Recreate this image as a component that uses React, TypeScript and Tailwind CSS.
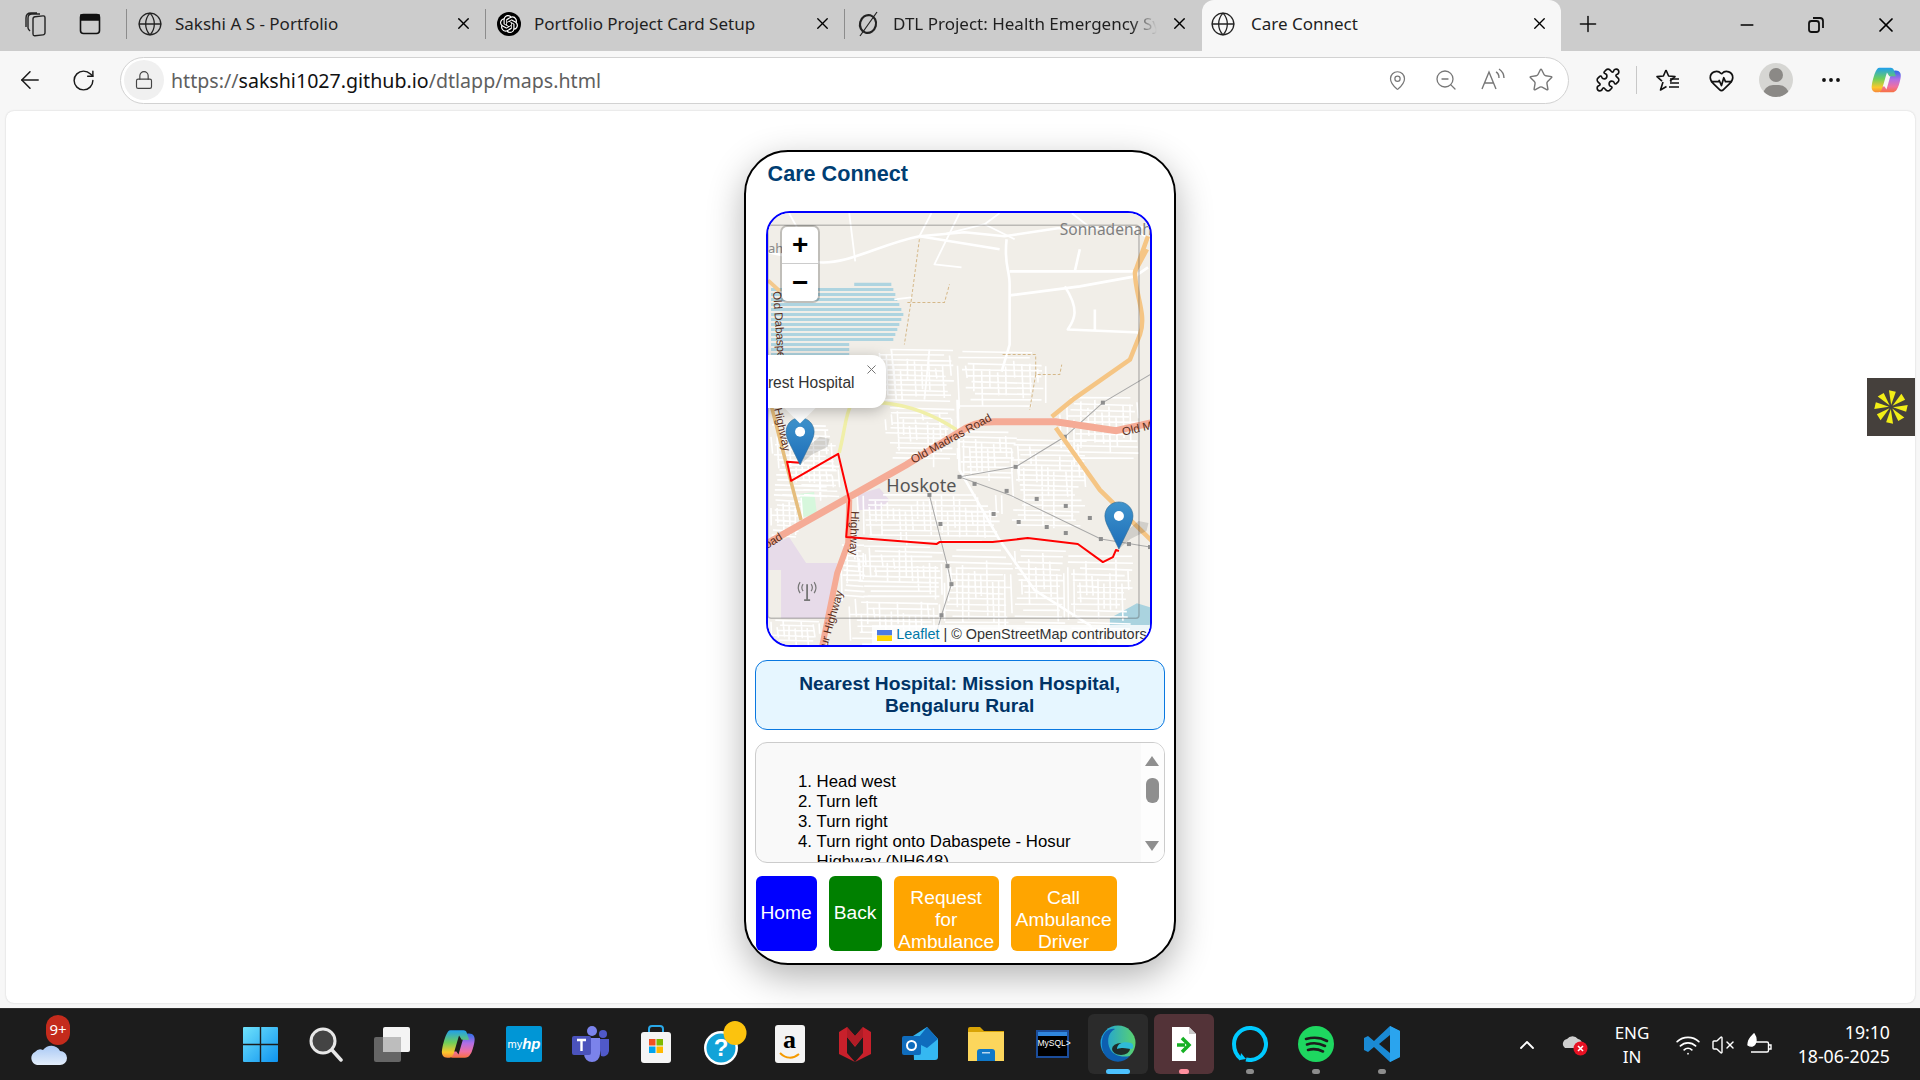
import React from 'react';
import { ArrowLeft, RotateCw, Lock, MapPin, ZoomOut, Star, Puzzle, HeartPulse, MoreHorizontal, X, Plus, Minus, Globe, ChevronUp, Wifi, VolumeX } from 'lucide-react';
import { SiOpenai } from 'react-icons/si';

const font = { fontFamily: '"Noto Sans", sans-serif' };

// white street grids for the map, seeded so every run draws the same streets
function grid(x: number, y: number, w: number, h: number, dx: number, dy: number, seed: number) {
  let s = seed;
  const r = () => {
    s = (s * 9301 + 49297) % 233280;
    return s / 233280;
  };
  let d = '';
  for (let yy = y; yy <= y + h; yy += dy) {
    const a = x + r() * w * 0.2;
    const b = x + w - r() * w * 0.2;
    d += `M${a.toFixed(1)} ${yy.toFixed(1)}L${b.toFixed(1)} ${(yy + r() * 2).toFixed(1)}`;
  }
  for (let xx = x; xx <= x + w; xx += dx) {
    const a = y + r() * h * 0.4;
    const b = a + 10 + r() * h * 0.6;
    d += `M${xx.toFixed(1)} ${a.toFixed(1)}L${(xx + r() * 2).toFixed(1)} ${b.toFixed(1)}`;
  }
  return d;
}

const streets = [
  grid(886, 408, 72, 52, 6, 5, 3),
  grid(958, 432, 62, 48, 6, 5, 11),
  grid(858, 495, 145, 48, 6, 5, 17),
  grid(858, 546, 90, 52, 6, 5, 29),
  grid(945, 550, 70, 90, 6, 6, 41),
  grid(1012, 440, 75, 85, 6, 5, 53),
  grid(1060, 398, 82, 62, 7, 6, 61),
  grid(1068, 556, 65, 72, 6, 6, 71),
  grid(1015, 550, 52, 78, 7, 6, 83),
  grid(772, 425, 65, 70, 6, 5, 97),
  grid(797, 465, 44, 30, 6, 5, 101),
  grid(772, 495, 30, 40, 6, 5, 107),
  grid(880, 350, 76, 52, 7, 5, 113),
  grid(958, 352, 90, 55, 8, 6, 127),
  grid(772, 620, 50, 25, 6, 5, 131),
  grid(850, 596, 95, 48, 6, 6, 139),
  grid(842, 545, 24, 50, 6, 5, 149),
].join('');

const railStops: [number, number][] = [
  [1103, 403], [1065, 437], [1016, 467], [960, 477], [975, 484], [1007, 491], [994, 514], [1019, 522], [1037, 499],
  [1066, 506], [1066, 533], [1090, 518], [1047, 527], [1101, 539], [1129, 544], [1150, 547], [930, 495], [941, 524], [948, 566], [952, 584], [942, 615],
];

function Pin({ x, y }: { x: number; y: number }) {
  return (
    <g transform={`translate(${x - 14.5} ${y - 48})`}>
      <path d="M14.5 48L26 38 L42 30 L44 22 L34 20 L22 30Z" fill="#000" opacity="0.13" />
      <path d="M14.5 1C6.5 1 .5 7.5 .5 15c0 5.5 3 10.5 5.5 15.5L14.5 48l8.5-17.5c2.5-5 5.5-10 5.5-15.5C28.5 7.5 22.500 1 14.5 1Z" fill="url(#pinFill)" stroke="#2e6c97" strokeWidth="0.6" />
      <circle cx="14.5" cy="15" r="5" fill="#fff" />
    </g>
  );
}

function MapDrawing() {
  return (
    <svg viewBox="769 214 381 430" className="block w-full h-full" style={{ backgroundColor: '#f1eee8' }}>
      <defs>
        <linearGradient id="pinFill" x1="0" y1="0" x2="0" y2="1">
          <stop offset="0" stopColor="#3f93cc" />
          <stop offset="1" stopColor="#1c6db8" />
        </linearGradient>
      </defs>
      {/* land use */}
      <path d="M769 547L790 537 807 563 838 563 827 618 782 618 782 570 769 570Z" fill="#e7dbe9" />
      <path d="M857 495L880 488 890 500 880 510 860 510Z" fill="#e7dbe9" />
      <path d="M800 494L815 492 818 515 804 517Z" fill="#d6f7dc" />
      <path d="M1110 618L1137 603 1150 607 1150 630 1110 630Z" fill="#aad3df" />
      {/* lake stripes */}
      <g stroke="#aed4e0" strokeWidth="3">
        {Array.from({ length: 16 }).map((_, i) => (
          <line key={i} x1={i < 1 ? 855 : 772} y1={285 + i * 5} x2={i > 11 ? 850 : 904 - Math.abs(i - 6) * 2} y2={285 + i * 5} />
        ))}
      </g>
      {/* streets */}
      <path d={streets} fill="none" stroke="#fff" strokeWidth="1.6" />
      <g fill="none" stroke="#fff" strokeWidth="2.6" strokeLinejoin="round">
        <path d="M769 253L820 263C850 265 880 245 920 237L965 233 1005 237 1058 229 1148 228" />
        <path d="M920 237L1000 250M1007 240C1004 265 1010 270 1010 285L1010 345 1002 372" />
        <path d="M1010 296L1080 287 1135 277 1148 268M1010 272L1135 272M1075 272L1080 250" />
        <path d="M1065 287C1080 310 1075 320 1068 330L1140 333M1095 310L1095 330" />
        <path d="M958 400L960 470 1000 540 1035 590 1090 625 1100 644" />
        <path d="M960 214L935 265 962 268M895 300L912 298" strokeWidth="1.8" />
        <path d="M892 350L897 400M930 350L925 400" strokeWidth="1.8" />
        <path d="M920 237L932 214M945 235L985 225 1015 240M1000 214L985 225M1072 214L1090 228M1130 228L1150 240M790 214L800 232M850 214L856 262" strokeWidth="1.8" />
      </g>
      {/* tracks */}
      <path d="M920 240L912 300 905 345M908 303L945 303 950 285M1003 355L1036 355 1036 375 1060 375 1062 365M1036 375L1030 410" fill="none" stroke="#d5b889" strokeWidth="1" strokeDasharray="3 2" />
      {/* railway */}
      <g fill="none" stroke="#a8a8a8" strokeWidth="1">
        <path d="M1150 375L1103 403 1065 437 1016 467 960 477 1010 495 1101 539 1150 547" />
        <path d="M930 495L948 566 952 584 942 615 935 640" />
      </g>
      {railStops.map(([x, y], i) => (
        <rect key={i} x={x - 2} y={y - 2} width="4" height="4" fill="#8e8e8e" />
      ))}
      {/* main roads */}
      <path d="M840 453C846 430 846 415 852 405L883 403C905 405 930 412 957 430" fill="none" stroke="#f0efa8" strokeWidth="3.5" />
      <path d="M772 405L787 463 802 520" fill="none" stroke="#e5bd7c" strokeWidth="3.5" />
      <path d="M769 281L781 292" fill="none" stroke="#f3c88c" strokeWidth="4" />
      <path d="M1148 237L1135 273C1135 295 1147 315 1140 335L1130 360 1073 400 1052 417M1056 428L1100 490 1153 542M1147 250L1135 272" fill="none" stroke="#f5c584" strokeWidth="4.5" />
      <path d="M767 544L907 465 967 428C980 421 990 422 1000 422L1056 422 1116 431 1152 423" fill="none" stroke="#f5ab96" strokeWidth="7" />
      <path d="M850 500L849 543 838 573 823 646" fill="none" stroke="#f5ab96" strokeWidth="6" />
      {/* tile frame */}
      <rect x="769" y="226" width="370" height="392" rx="3" fill="none" stroke="#555" strokeOpacity="0.35" strokeWidth="1.5" />
      {/* labels */}
      <g fontFamily='"Noto Sans", sans-serif'>
        <text x="1060" y="236" fontSize="15.500" fill="#7f7f7f">Sonnadenahalli</text>
        <text x="769" y="254" fontSize="13" fill="#8a8a8a">ah</text>
        <text x="887" y="492" fontSize="18" fill="#555">Hoskote</text>
      </g>
      <g fontFamily='"Liberation Sans", sans-serif' fontSize="11.5" fill="#5a2f20">
        <text transform="translate(774 292) rotate(86)">Old Dabaspe</text>
        <text transform="translate(775 409) rotate(78)">Highway</text>
        <text transform="translate(914 464) rotate(-29)">Old Madras Road</text>
        <text transform="translate(1123 436) rotate(-13)">Old Madras</text>
        <text transform="translate(768 549) rotate(-32)">oad</text>
        <text transform="translate(852 511) rotate(92)">Highway</text>
        <text transform="translate(828 647) rotate(-74)">ur Highway</text>
      </g>
      {/* antenna */}
      <g fill="none" stroke="#777" strokeWidth="1.2">
        <path d="M808 584V600M805 600H811" strokeWidth="1.8" />
        <path d="M804 584a6 6 0 0 0 0 7M812 584a6 6 0 0 1 0 7M801 582a10 10 0 0 0 0 11M815 582a10 10 0 0 1 0 11" />
      </g>
      {/* route */}
      <path d="M801 463L788 462 792 481 839 454 850 500 847 537 937 544 940 542 993 542 1028 538 1078 544 1103 562 1113 557 1116 550 1119 551" fill="none" stroke="#ff0000" strokeWidth="2" strokeLinejoin="round" />
      <Pin x={801} y={465} />
      <Pin x={1119} y={549} />
    </svg>
  );
}

function CareConnect() {
  const steps = ['Head west', 'Turn left', 'Turn right', 'Turn right onto Dabaspete - Hosur Highway (NH648)', 'Turn left onto Old Madras Road'];
  const buttons = [
    { label: 'Home', cls: 'w-[61px] bg-[#0000ff] justify-center' },
    { label: 'Back', cls: 'w-[53px] bg-[#008000] justify-center' },
    { label: 'Request for Ambulance', cls: 'w-[105px] bg-[#ffa500] pt-[11px]' },
    { label: 'Call Ambulance Driver', cls: 'w-[106px] bg-[#ffa500] pt-[11px]' },
  ];

  return (
    <div
      className="w-[432px] h-[815px] box-border border-[2.4px] border-black rounded-[44px] bg-white shadow-[0_12px_36px_rgba(0,0,0,0.3)] flex flex-col px-[8.6px] overflow-hidden"
      style={{ fontFamily: '"Liberation Sans", Arial, sans-serif' }}
    >
      <h1 className="h-[41.2px] mb-[17.9px] pt-[4px] pl-[13px] flex items-center text-[21.6px] font-bold text-[#003e73]">Care Connect</h1>

      <div className="relative w-[386px] h-[435.500px] ml-[11.7px] border-[2.4px] border-[#0000ff] rounded-[24px] overflow-hidden shrink-0">
        <MapDrawing />
        {/* zoom control */}
        <div className="absolute left-[14px] top-[14px] w-[36px] h-[74px] bg-white rounded-[5px] shadow-[0_0_0_2px_rgba(0,0,0,0.2)] flex flex-col text-black text-[28px] font-bold">
          <div className="h-[37px] flex items-center justify-center border-b border-[#cccccc]">+</div>
          <div className="h-[37px] flex items-center justify-center">−</div>
        </div>
        {/* popup */}
        <div className="absolute left-[21px] top-[184px] w-[22px] h-[22px] bg-white rotate-45" />
        <div className="absolute left-[-40px] top-[142px] w-[158px] h-[53px] pt-[2px] bg-white rounded-[14px] flex items-center pl-[11px] text-[15.6px] text-[#333333] whitespace-nowrap shadow-[0_3px_14px_rgba(0,0,0,0.25)]">
          Nearest Hospital
        </div>
        <X className="absolute left-[96px] top-[149px] text-[#757575]" size={15} strokeWidth={1.6} />
        {/* attribution */}
        <div className="absolute right-0 bottom-0 h-[20px] w-[278px] pt-[1px] bg-white/80 flex items-center pl-[5px] text-[14.4px] text-[#333333] whitespace-nowrap">
          <svg width="15" height="11" viewBox="0 0 15 11" className="mr-[4px]">
            <rect width="15" height="5.500" fill="#4c7be1" />
            <rect y="5.500" width="15" height="5.500" fill="#ffd500" />
          </svg>
          <span className="text-[#0078a8]">Leaflet</span>
          <span className="ml-[4px]">| © OpenStreetMap contributors</span>
        </div>
      </div>

      <div className="w-[410px] h-[70px] mt-[13px] shrink-0 border border-[#0a78e0] rounded-[12px] bg-[#e6f6ff] flex items-center justify-center text-center text-[19.2px] leading-[22px] font-bold text-[#003366] px-[20px]">
        Nearest Hospital: Mission Hospital, Bengaluru Rural
      </div>

      <div className="w-[410px] h-[121px] mt-[12px] shrink-0 border border-[#cccccc] rounded-[12px] bg-[#f9f9f9] flex overflow-hidden">
        <div className="flex-1 overflow-hidden pt-[29px] pl-[42px] pr-[16px]">
          <ol className="list-decimal pl-[19px] text-[16.8px] leading-[20px] text-black">
            {steps.map((s) => (
              <li key={s}>{s}</li>
            ))}
          </ol>
        </div>
        <div className="w-[23px] bg-[#fdfdfd] flex flex-col items-center pt-[13px]">
          <div className="w-0 h-0 border-x-[7px] border-x-transparent border-b-[10px] border-b-[#8f8f8f]" />
          <div className="w-[13px] h-[25px] mt-[12px] rounded-[6px] bg-[#8f8f8f]" />
          <div className="w-0 h-0 mt-[38px] border-x-[7px] border-x-transparent border-t-[10px] border-t-[#8f8f8f]" />
        </div>
      </div>

      <div className="flex gap-[12px] mt-[13px] pl-[1px] shrink-0">
        {buttons.map((b) => (
          <button key={b.label} className={`h-[75px] rounded-[6px] text-white text-[19.2px] leading-[22px] px-[4px] overflow-hidden flex flex-col items-center text-center ${b.cls}`}>
            {b.label}
          </button>
        ))}
      </div>
    </div>
  );
}

function Tab({ icon, title }: { icon: React.ReactNode; title: string }) {
  return (
    <div className="h-full w-[359px] pb-[4px] flex items-center shrink-0">
      <div className="w-px h-[30px] bg-[#8c8c8c]" />
      <div className="w-[44px] flex justify-center pl-[2px]">{icon}</div>
      <div className="ml-[4px] w-[272px] text-[17px] text-[#1f1f1f] whitespace-nowrap overflow-hidden">{title}</div>
      <X size={19} strokeWidth={1.7} className="ml-[7px] text-black" />
    </div>
  );
}

function ReadAloud() {
  return (
    <svg width="26" height="26" viewBox="0 0 26 26" fill="none" stroke="#777" strokeWidth="1.4">
      <path d="M2 22L9 5l7 17M5 16h8" />
      <path d="M16 5c2 1 3 3 3 6M19 2c3 2 5 5 5 9" />
    </svg>
  );
}

function FavStar() {
  return (
    <svg width="26" height="26" viewBox="0 0 26 26" fill="none" stroke="#111" strokeWidth="1.6" strokeLinejoin="round">
      <path d="M11 3l2.600 6 6.400.6-4.500 4 1 1M8 15l-2.500 8 6-3.500M11 3L8.400 9 2 9.600l5 4.600" />
      <path d="M15 12h9M15 16h9M14 20h10" />
    </svg>
  );
}

function Copilot({ size }: { size: number }) {
  return (
    <svg width={size} height={size} viewBox="0 0 34 34">
      <defs>
        <linearGradient id={`cpA${size}`} x1="0" y1="0" x2="0" y2="1">
          <stop offset="0" stopColor="#1f9fee" />
          <stop offset="0.45" stopColor="#6fcf5a" />
          <stop offset="0.8" stopColor="#fbc82b" />
          <stop offset="1" stopColor="#f7883a" />
        </linearGradient>
        <linearGradient id={`cpB${size}`} x1="0" y1="0" x2="0" y2="1">
          <stop offset="0" stopColor="#2a6fe8" />
          <stop offset="0.4" stopColor="#b06ee6" />
          <stop offset="0.75" stopColor="#f06fa0" />
          <stop offset="1" stopColor="#f7713f" />
        </linearGradient>
      </defs>
      <path d="M24 30H12c-2 0-3-1-3.500-3l-1-3h8l2 3c1-3 4-14 5-17 1-2 2-3 4-3h1c4 0 6 3 5 8-1 6-3 11-4 12-1 2-3 3-5 3Z" fill={`url(#cpB${size})`} />
      <path d="M10 4h12c2 0 3 1 3.500 3l2 6h-7L18 9c-1 3-4 14-5 17-1 2-2 4-4 4H7c-4 0-6-3-5-8 1-6 3-12 4-14 1-2 2-4 4-4Z" fill={`url(#cpA${size})`} />
    </svg>
  );
}

const TB = ({ children, glow }: { children: React.ReactNode; glow?: string }) => (
  <div className={`relative w-[66px] h-[60px] flex items-center justify-center shrink-0 ${glow ?? ''}`}>{children}</div>
);

function TaskbarIcons() {
  return (
    <div className="flex items-center">
      <TB>
        <svg width="35" height="35" viewBox="0 0 35 35">
          <defs>
            <linearGradient id="win" x1="0" y1="0" x2="1" y2="1">
              <stop offset="0" stopColor="#6fe2fb" />
              <stop offset="1" stopColor="#0e93f0" />
            </linearGradient>
          </defs>
          <path d="M1 0h15.800v16.800H0V1a1 1 0 0 1 1-1ZM18.200 0H34a1 1 0 0 1 1 1v15.800H18.200ZM0 18.200h16.800V35H1a1 1 0 0 1-1-1ZM18.200 18.200H35V34a1 1 0 0 1-1 1H18.200Z" fill="url(#win)" />
        </svg>
      </TB>
      <TB>
        <svg width="36" height="36" viewBox="0 0 36 36">
          <circle cx="15" cy="15" r="12" fill="#444" stroke="#e8e8e8" strokeWidth="3" />
          <path d="M24 24l9 10" stroke="#e8e8e8" strokeWidth="3.500" strokeLinecap="round" />
        </svg>
      </TB>
      <TB>
        <svg width="36" height="36" viewBox="0 0 36 36">
          <rect x="9" y="1" width="27" height="25" rx="2" fill="#f4f4f4" />
          <rect x="0" y="11" width="27" height="25" rx="2" fill="#6a6a6a" fillOpacity="0.93" />
          <rect x="9" y="11" width="18" height="15" fill="#bdbdbd" />
        </svg>
      </TB>
      <TB><Copilot size={36} /></TB>
      <TB>
        <div className="w-[36px] h-[36px] rounded-[2px] bg-[#0096d6] flex items-center justify-center text-white text-[11px]" style={{ fontFamily: '"Liberation Sans", sans-serif' }}>
          my<span className="font-bold italic text-[15px]">hp</span>
        </div>
      </TB>
      <TB>
        <svg width="37" height="36" viewBox="0 0 37 36">
          <circle cx="20" cy="5" r="5" fill="#7b83eb" />
          <circle cx="31" cy="8" r="4" fill="#5059c9" />
          <path d="M26 13h11v12a6 6 0 0 1-8 5Z" fill="#5059c9" />
          <path d="M10 12h18v16a8 8 0 0 1-16 0Z" fill="#7b83eb" />
          <rect x="0" y="10" width="19" height="19" rx="2" fill="#4b53bc" />
          <path d="M5 14h9M9.500 14v11" stroke="#fff" strokeWidth="2.400" />
        </svg>
      </TB>
      <TB>
        <svg width="30" height="38" viewBox="0 0 30 38">
          <path d="M8 9V4a3 3 0 0 1 3-3h8a3 3 0 0 1 3 3v5" fill="none" stroke="#29a8e8" strokeWidth="2" />
          <rect y="7" width="30" height="31" rx="3" fill="#f5f5f5" />
          <rect x="8" y="14" width="6.500" height="6.500" fill="#f25022" />
          <rect x="15.500" y="14" width="6.500" height="6.500" fill="#7fba00" />
          <rect x="8" y="21.500" width="6.500" height="6.500" fill="#00a4ef" />
          <rect x="15.500" y="21.500" width="6.500" height="6.500" fill="#ffb900" />
        </svg>
      </TB>
      <TB>
        <svg width="44" height="46" viewBox="0 0 44 46" className="ml-[5px]">
          <circle cx="18" cy="27" r="17" fill="#fff" />
          <circle cx="18" cy="27" r="14.500" fill="#12a3d8" />
          <text x="18" y="35" textAnchor="middle" fontSize="24" fontWeight="700" fill="#fff" fontFamily='"Liberation Sans", sans-serif'>?</text>
          <ellipse cx="32" cy="12" rx="11.500" ry="12" fill="#fcc30e" />
        </svg>
      </TB>
      <TB>
        <div className="ml-[3px] w-[30px] h-[38px] rounded-[3px] bg-[#f4f4f4] relative flex justify-center">
          <span className="text-[26px] leading-[30px] font-bold text-black" style={{ fontFamily: '"Liberation Serif", serif' }}>a</span>
          <svg className="absolute left-[4px] bottom-[3px]" width="22" height="8" viewBox="0 0 22 8">
            <path d="M1 1c6 6 13 6 19 1" fill="none" stroke="#f59a00" strokeWidth="2" />
          </svg>
        </div>
      </TB>
      <TB>
        <svg width="32" height="36" viewBox="0 0 32 36" className="ml-[2px]">
          <path d="M0 6L8 1v26l8 9-16-8ZM32 6L24 1v26l-8 9 16-8ZM8 1l8 9 8-9v10l-8 10-8-10Z" fill="#c8202b" />
          <path d="M8 1l8 9 8-9v10l-8 9-8-9Z" fill="#b01c26" />
        </svg>
      </TB>
      <TB>
        <svg width="36" height="34" viewBox="0 0 36 34">
          <path d="M11 9L25 0l11 12v18a3 3 0 0 1-3 3H12Z" fill="#35b8f1" />
          <path d="M25 0l11 12-11 9-12-6Z" fill="#0f6cbd" />
          <rect x="0" y="9" width="19" height="19" rx="2" fill="#0f6cbd" />
          <circle cx="9.500" cy="18.500" r="4.500" fill="none" stroke="#fff" strokeWidth="2" />
        </svg>
      </TB>
      <TB>
        <svg width="36" height="34" viewBox="0 0 36 34">
          <path d="M0 2a2 2 0 0 1 2-2h10l4 4h20v30H0Z" fill="#d9a406" />
          <rect y="5" width="36" height="29" fill="#fcd65c" />
          <path d="M9 25a3 3 0 0 1 3-3h12a3 3 0 0 1 3 3v9H9Z" fill="#0f78c8" />
          <rect x="14" y="25" width="8" height="1.500" fill="#fff" opacity="0.7" />
        </svg>
      </TB>
      <TB>
        <div className="w-[33px] h-[28px] border-[2px] border-[#1b4d9b] bg-black flex flex-col">
          <div className="h-[4px] bg-[#2f86dd]" />
          <div className="flex-1 text-white text-[8.500px] leading-[15px] text-center" style={{ fontFamily: '"Liberation Sans", sans-serif' }}>MySQL&gt;</div>
        </div>
      </TB>
      <TB glow="bg-[#2b2b2b] rounded-[6px] !w-[60px] mx-[3px]">
        <svg width="36" height="38" viewBox="0 0 36 38">
          <defs>
            <linearGradient id="edgeA" x1="0" y1="0" x2="1" y2="0">
              <stop offset="0" stopColor="#1b9de2" />
              <stop offset="1" stopColor="#5ad26f" />
            </linearGradient>
          </defs>
          <circle cx="18" cy="18" r="17.500" fill="url(#edgeA)" />
          <path d="M2 16C3 7 9 3 15 4c-8 4-8 14-5 20 3 6 11 9 20 7-5 6-13 7-19 4C4 32 1 24 2 16Z" fill="#0d5fb0" />
          <ellipse cx="21" cy="24" rx="9" ry="6" fill="#1c1c1c" opacity="0.9" />
          <path d="M17 24c0-5 6-8 14-6 3 1 3 6 0 6-4 0-7-2-14 0Z" fill="#2fbbd6" />
        </svg>
        <div className="absolute bottom-[0px] left-[18px] w-[24px] h-[5px] rounded-full bg-[#4cc2ff]" />
      </TB>
      <TB glow="bg-[#533338] rounded-[6px] !w-[60px] mx-[3px]">
        <svg width="24" height="34" viewBox="0 0 24 34">
          <path d="M0 0h17l7 7v27H0Z" fill="#fff" />
          <path d="M17 0l7 7h-7Z" fill="#c8c8c8" />
          <path d="M5 18h8M10 11l7 7-7 7" fill="none" stroke="#16b024" strokeWidth="3.500" />
        </svg>
        <div className="absolute bottom-[0px] left-[25px] w-[10px] h-[5px] rounded-full bg-[#ff8f9e]" />
      </TB>
      <TB>
        <svg width="36" height="36" viewBox="0 0 36 36">
          <path d="M9 33C4 29 2 24 2 18a16 16 0 1 1 12 15.500" fill="none" stroke="#00caff" strokeWidth="4" />
          <path d="M9 27l5 6-6 1Z" fill="#00caff" />
        </svg>
        <div className="absolute bottom-0 left-[29px] w-[8px] h-[5px] rounded-full bg-[#8c8c8c]" />
      </TB>
      <TB>
        <svg width="36" height="36" viewBox="0 0 36 36">
          <circle cx="18" cy="18" r="18" fill="#1ed760" />
          <path d="M8 13c7-2 14-2 21 2M9 18.500c6-2 12-1.500 18 1.500M10 24c5-1.500 10-1 15 1.500" fill="none" stroke="#1c1c1c" strokeWidth="2.600" strokeLinecap="round" />
        </svg>
        <div className="absolute bottom-0 left-[29px] w-[8px] h-[5px] rounded-full bg-[#8c8c8c]" />
      </TB>
      <TB>
        <svg width="36" height="36" viewBox="0 0 36 36">
          <path d="M26 0l10 5v26l-10 5L10 21l-6 5-4-2V12l4-2 6 5Z" fill="#1a8ad4" />
          <path d="M26 0l10 5v26l-10 5Z" fill="#2aa4ee" />
          <path d="M26 9L15 18l11 9Z" fill="#1c1c1c" />
        </svg>
        <div className="absolute bottom-0 left-[29px] w-[8px] h-[5px] rounded-full bg-[#8c8c8c]" />
      </TB>
    </div>
  );
}

export default function App() {
  return (
    <div className="w-[1920px] h-[1080px] overflow-hidden flex flex-col bg-[#f7f7f7]" style={font}>
      {/* tab strip */}
      <div className="h-[51px] bg-[#cccccc] flex items-center shrink-0">
        <div className="w-[126px] pb-[4px] flex items-center shrink-0 h-full">
          <svg width="26" height="26" viewBox="0 0 26 26" fill="none" stroke="#222" strokeWidth="1.4" className="ml-[23px]">
            <rect x="10" y="5" width="12" height="19" rx="2" transform="skewY(-6) translate(0 2)" />
            <path d="M7 20c-1-1-2-2-2-3V7c0-3 2-4 4-4h8M3 16V7c0-3 2-5 5-5h6" />
          </svg>
          <svg width="22" height="22" viewBox="0 0 22 22" fill="none" stroke="#111" strokeWidth="1.6" className="ml-[30px]">
            <rect x="1.500" y="1.500" width="19" height="19" rx="3" />
            <path d="M2 2h18v5H2Z" fill="#111" />
          </svg>
        </div>
        <Tab title="Sakshi A S - Portfolio" icon={<Globe size={26} strokeWidth={1.2} className="text-[#222]" />} />
        <Tab
          title="Portfolio Project Card Setup"
          icon={
            <div className="w-[24px] h-[24px] rounded-full bg-black flex items-center justify-center">
              <SiOpenai size={18} className="text-white" />
            </div>
          }
        />
        <div className="h-full pb-[4px] flex items-center shrink-0 w-[358px]">
          <div className="w-px h-[30px] bg-[#8c8c8c]" />
          <div className="w-[44px] flex justify-center pl-[2px]">
            <svg width="24" height="26" viewBox="0 0 24 26" fill="none" stroke="#222">
              <ellipse cx="12" cy="13" rx="8" ry="9" strokeWidth="2.200" transform="rotate(15 12 13)" />
              <path d="M4 25L21 1" strokeWidth="1.200" />
            </svg>
          </div>
          <div className="ml-[4px] w-[264px] text-[17px] text-[#1f1f1f] whitespace-nowrap overflow-hidden [mask-image:linear-gradient(to_right,black_90%,transparent)]">
            DTL Project: Health Emergency System
          </div>
          <X size={19} strokeWidth={1.7} className="ml-[13px] text-black" />
        </div>
        <div className="h-full pb-[4px] w-[359px] shrink-0 bg-[#f7f7f7] rounded-t-[12px] flex items-center">
          <Globe size={26} strokeWidth={1.2} className="ml-[8px] text-[#222]" />
          <div className="ml-[15px] w-[267px] text-[17px] text-[#1f1f1f]">Care Connect</div>
          <X size={19} strokeWidth={1.7} className="ml-[12px] text-black" />
        </div>
        <Plus size={26} strokeWidth={1.4} className="ml-[14px] mt-[-4px] text-[#111] shrink-0" />
        <Minus size={20} strokeWidth={1.8} className="ml-[136px] mt-[-2px] text-black shrink-0" />
        <svg width="18" height="18" viewBox="0 0 18 18" fill="none" stroke="#111" strokeWidth="1.8" className="ml-[50px] mt-[-2px] shrink-0">
          <rect x="2" y="5" width="10" height="11" rx="2.500" />
          <path d="M6 2h7a3 3 0 0 1 3 3v7" />
        </svg>
        <X size={24} strokeWidth={1.7} className="ml-[49px] mt-[-2px] text-black shrink-0" />
      </div>

      {/* toolbar */}
      <div className="h-[55px] pt-[3px] flex items-center shrink-0">
        <ArrowLeft size={28} strokeWidth={1.3} className="ml-[16px] text-[#1a1a1a] shrink-0" />
        <RotateCw size={25} strokeWidth={1.4} className="ml-[27px] text-[#1a1a1a] shrink-0" />
        <div className="ml-[24px] w-[1449px] h-[47px] shrink-0 bg-white border-[1.5px] border-[#d2d2d2] rounded-full flex items-center">
          <div className="ml-[3px] w-[40px] h-[40px] rounded-full bg-[#f0f0f0] flex items-center justify-center">
            <Lock size={20} strokeWidth={1.4} className="text-[#444]" />
          </div>
          <div className="ml-[7px] pt-[2px] w-[1184px] text-[19.6px] text-[#5f5f5f] whitespace-nowrap">
            https://<span className="text-[#111]">sakshi1027.github.io</span>/dtlapp/maps.html
          </div>
          <MapPin size={21} strokeWidth={1.4} className="ml-[32px] text-[#777]" />
          <ZoomOut size={24} strokeWidth={1.3} className="ml-[26px] text-[#777]" />
          <div className="ml-[22px]"><ReadAloud /></div>
          <Star size={26} strokeWidth={1.3} className="ml-[22px] text-[#777]" />
        </div>
        <Puzzle size={26} strokeWidth={1.5} className="ml-[26px] text-[#111] shrink-0" />
        <div className="ml-[15px] w-px h-[28px] bg-[#c8c8c8] shrink-0" />
        <div className="ml-[18px] shrink-0"><FavStar /></div>
        <HeartPulse size={27} strokeWidth={1.5} className="ml-[27px] text-[#111] shrink-0" />
        <div className="ml-[24px] w-[34px] h-[34px] rounded-full bg-[#d6d6d3] relative overflow-hidden shrink-0">
          <div className="absolute left-[10px] top-[5px] w-[14px] h-[14px] rounded-full bg-[#8b8986]" />
          <div className="absolute left-[4px] top-[22px] w-[26px] h-[20px] rounded-full bg-[#8b8986]" />
        </div>
        <MoreHorizontal size={24} strokeWidth={1.8} className="ml-[26px] text-[#111] shrink-0" />
        <div className="ml-[27px] shrink-0"><Copilot size={32} /></div>
      </div>

      {/* page */}
      <div className="relative h-[892px] mx-[5.5px] mt-[5px] bg-white rounded-[8px] shrink-0 shadow-[0_0_2px_rgba(0,0,0,0.18)] flex justify-center pt-[39px]">
        <CareConnect />
        <div className="absolute right-0 top-[267px] w-[48px] h-[58px] bg-[#45403c] flex items-center justify-center">
          <svg width="34" height="34" viewBox="0 0 34 34" fill="#f2ee16">
            {[0, 45, 90, 135, 180, 225, 270, 315].map((a) => (
              <path key={a} d="M13.500 0.500L20.500 1.500L17 15Z" transform={`rotate(${a + 5} 17 17)`} />
            ))}
          </svg>
        </div>
      </div>

      {/* taskbar */}
      <div className="relative mt-[5px] flex-1 bg-[#1c1c1c] border-t border-[#2e2e2e] flex items-center text-white">
        <div className="relative ml-[29px] w-[38px] h-[40px] shrink-0">
          <svg width="38" height="26" viewBox="0 0 38 26" className="absolute left-0 bottom-0">
            <defs>
              <linearGradient id="cloud" x1="0" y1="0" x2="0" y2="1">
                <stop offset="0" stopColor="#a9c9f5" />
                <stop offset="1" stopColor="#e4eefb" />
              </linearGradient>
            </defs>
            <path d="M8 26a7 7 0 0 1-2-13 7 7 0 0 1 8-2A10 10 0 0 1 31 12a7 7 0 0 1 0 14Z" fill="url(#cloud)" />
          </svg>
          <div className="absolute left-[17px] top-[-10px] w-[24px] h-[30px] rounded-full bg-[#c42b1c] flex items-center justify-center text-[15px]">9+</div>
        </div>
        <div className="ml-[160px] mt-[-1px] shrink-0"><TaskbarIcons /></div>
        <ChevronUp size={24} strokeWidth={1.8} className="ml-[100px] shrink-0" />
        <svg width="26" height="22" viewBox="0 0 26 22" className="ml-[23px] shrink-0">
          <path d="M3 14a5 5 0 0 1 2-9 7 7 0 0 1 11 0 5 5 0 0 1 2 9Z" fill="#cfcfcf" />
          <circle cx="18.500" cy="14.500" r="7" fill="#e81123" />
          <path d="M16 12l5 5M21 12l-5 5" stroke="#fff" strokeWidth="1.600" />
        </svg>
        <div className="ml-[25px] w-[38px] text-center text-[17px] leading-[24px] shrink-0">
          <div>ENG</div>
          <div>IN</div>
        </div>
        <Wifi size={26} strokeWidth={1.6} className="ml-[24px] shrink-0" />
        <VolumeX size={24} strokeWidth={1.4} className="ml-[10px] shrink-0" />
        <svg width="25" height="24" viewBox="0 0 25 24" fill="none" stroke="#fff" strokeWidth="1.400" className="ml-[12px] shrink-0">
          <path d="M7 9h13a1.500 1.500 0 0 1 1.500 1.500v7A1.500 1.500 0 0 1 20 19H4M22 12h2v4h-2" />
          <path d="M1 12C1 6 5 3 7 1c2 3 3 6 1 10-1 2-4 3-7 1Z" fill="#fff" />
        </svg>
        <div className="ml-[20px] w-[98px] mt-[-2px] text-right text-[17.7px] leading-[24px] shrink-0">
          <div>19:10</div>
          <div>18-06-2025</div>
        </div>
      </div>
    </div>
  );
}
